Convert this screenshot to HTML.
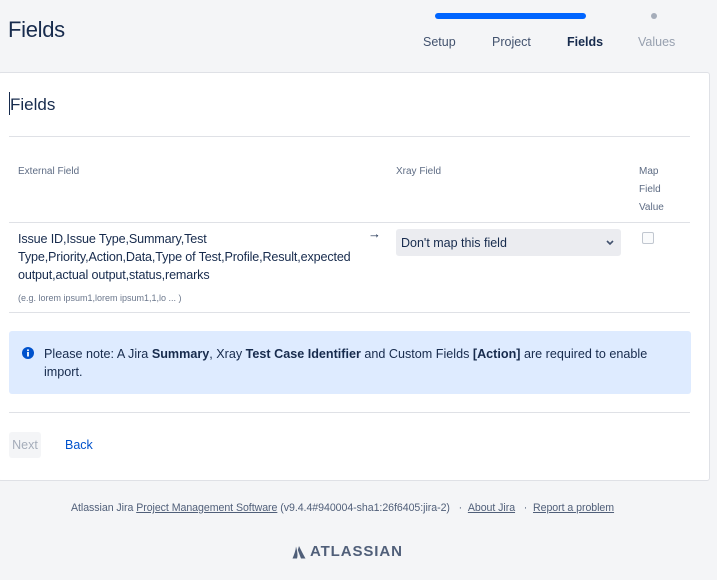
<!DOCTYPE html>
<html><head><style>
*{margin:0;padding:0;box-sizing:border-box}
body{width:717px;height:580px;background:#f4f5f7;font-family:"Liberation Sans",sans-serif;color:#172b4d;position:relative;overflow:hidden}
.a{position:absolute;white-space:nowrap}
</style></head><body>
<div class="a" style="left:8px;top:17px;font-size:22px;color:#172b4d;letter-spacing:-0.3px">Fields</div>
<div class="a" style="left:435px;top:13px;width:151px;height:6px;border-radius:3px;background:#0065ff"></div>
<div class="a" style="left:651px;top:13px;width:6px;height:6px;border-radius:3px;background:#a5adba"></div>
<div class="a" style="left:423px;top:35px;font-size:12.5px;color:#42526e">Setup</div>
<div class="a" style="left:492px;top:35px;font-size:12.5px;color:#42526e">Project</div>
<div class="a" style="left:567px;top:35px;font-size:12.5px;color:#172b4d;font-weight:bold">Fields</div>
<div class="a" style="left:638px;top:35px;font-size:12.5px;color:#97a0af">Values</div>

<div class="a" style="left:-2px;top:72px;width:712px;height:409px;background:#fff;border:1px solid #dfe1e6;border-radius:3px"></div>
<div class="a" style="left:9px;top:92px;width:1px;height:23px;background:#172b4d"></div>
<div class="a" style="left:10px;top:95px;font-size:17px">Fields</div>
<div class="a" style="left:9px;top:136px;width:681px;height:1px;background:#dfe1e6"></div>
<div class="a" style="left:18px;top:166px;font-size:10px;color:#5e6c84">External Field</div>
<div class="a" style="left:396px;top:166px;font-size:10px;color:#5e6c84">Xray Field</div>
<div class="a" style="left:639px;top:163px;font-size:10px;color:#5e6c84;line-height:18px;white-space:normal">Map<br>Field<br>Value</div>
<div class="a" style="left:9px;top:222px;width:681px;height:1px;background:#dfe1e6"></div>
<div class="a" style="left:18px;top:230px;font-size:12.6px;line-height:18px;letter-spacing:-0.15px">Issue ID,Issue Type,Summary,Test<br>Type,Priority,Action,Data,Type of Test,Profile,Result,expected<br>output,actual output,status,remarks</div>
<div class="a" style="left:18px;top:293px;font-size:9px;color:#6b778c">(e.g. lorem ipsum1,lorem ipsum1,1,lo ... )</div>
<div class="a" style="left:368px;top:226px;font-size:13px">→</div>
<div class="a" style="left:396px;top:229px;width:225px;height:27px;background:#ebecf0;border-radius:3px"></div>
<div class="a" style="left:401px;top:236px;font-size:12.5px">Don't map this field</div>
<svg class="a" style="left:606px;top:240px" width="8" height="6"><path d="M1 1l3 3 3-3" stroke="#42526e" stroke-width="1.6" fill="none"/></svg>
<div class="a" style="left:642px;top:232px;width:12px;height:12px;border:1px solid #c1c7d0;border-radius:2px;background:#fafbfc"></div>
<div class="a" style="left:9px;top:312px;width:681px;height:1px;background:#dfe1e6"></div>
<div class="a" style="left:9px;top:331px;width:682px;height:63px;background:#deebff;border-radius:3px"></div>
<svg class="a" style="left:22px;top:347px" width="12" height="12"><circle cx="6" cy="6" r="6" fill="#0052cc"/><rect x="5.1" y="5" width="1.8" height="4.5" fill="#fff"/><circle cx="6" cy="3.2" r="1" fill="#fff"/></svg>
<div class="a" style="left:44px;top:345px;font-size:12.6px;line-height:18px">Please note: A Jira <b>Summary</b>, Xray <b>Test Case Identifier</b> and Custom Fields <b>[Action]</b> are required to enable<br>import.</div>
<div class="a" style="left:9px;top:412px;width:681px;height:1px;background:#dfe1e6"></div>
<div class="a" style="left:9px;top:432px;width:32px;height:26px;background:#f4f5f7;border-radius:3px;font-size:12.5px;color:#a5adba;text-align:center;line-height:26px">Next</div>
<div class="a" style="left:65px;top:438px;font-size:12.5px;color:#0052cc">Back</div>

<div class="a" style="left:71px;top:502px;font-size:10.6px;color:#505f79;letter-spacing:-0.05px">Atlassian Jira <u>Project Management Software</u> (v9.4.4#940004-sha1:26f6405:jira-2) &nbsp;&nbsp;· &nbsp;<u>About Jira</u> &nbsp;&nbsp;· &nbsp;<u>Report a problem</u></div>
<svg class="a" style="left:292px;top:545px" width="14" height="14"><path d="M4 1.5c-.3 4-1.8 8-3.5 12h4.5c.7-2 1-5-1-12zM7 1c2 4 4 8 6.5 12.5H9L5.8 5z" fill="#505f79"/></svg>
<div class="a" style="left:310px;top:543px;font-size:15px;font-weight:bold;color:#505f79;letter-spacing:0.9px">ATLASSIAN</div>
</body></html>
